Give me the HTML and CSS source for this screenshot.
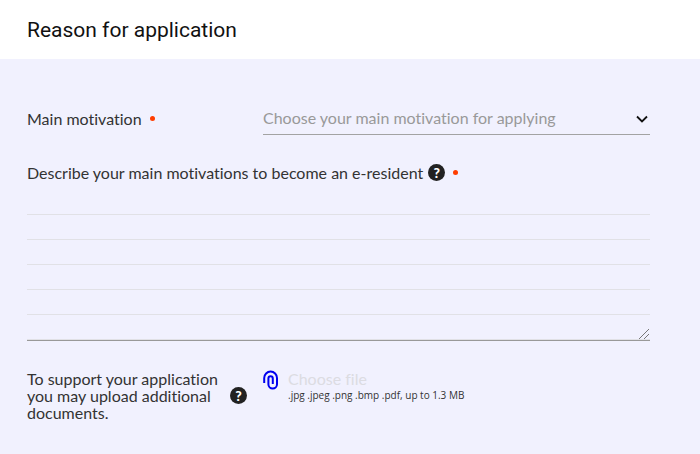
FILE: index.html
```html
<!DOCTYPE html>
<html lang="en">
<head>
    <meta charset="UTF-8">
    <meta name="viewport" content="width=device-width, initial-scale=1.0">
    <title>Reason for application</title>
    <link rel="stylesheet" href="styles.css">
</head>
<body>
    <header class="header">
        <h1 class="title">Reason for application</h1>
    </header>
    <form class="form">
        <div class="row">
            <div class="label-col">
                <label for="motivation">Main motivation</label>
                <span class="required"></span>
            </div>
            <div class="select-wrap">
                <select class="select" id="motivation" required>
                    <option value="">Choose your main motivation for applying</option>
                </select>
                <svg class="arrow" viewBox="0 0 12 8" width="12" height="8">
                    <path d="M1 1.500 6 6.500l5-5" fill="none" stroke="#111" stroke-width="1.800"/>
                </svg>
            </div>
        </div>

        <div class="describe">
            <div class="describe-label">
                <label for="description">Describe your main motivations to become an e-resident</label>
                <button class="help" type="button">?</button>
                <span class="required"></span>
            </div>
            <div class="textarea-wrap">
                <textarea class="textarea" id="description" required></textarea>
                <svg class="grip" viewBox="0 0 12 12" width="12" height="12">
                    <path d="M1 11 11 1M6 11l5-5" fill="none" stroke="#777" stroke-width="1"/>
                </svg>
            </div>
        </div>

        <div class="row upload">
            <div class="label-col">
                <label class="upload-label" for="file">To support your application you may upload additional documents.</label>
                <button class="help" type="button">?</button>
            </div>
            <div class="file">
                <svg class="clip" viewBox="0 0 16 20" width="16" height="20">
                    <path d="M1.200 13V8a6.400 6.400 0 0 1 12.800 0v6.200a4.300 4.300 0 0 1-8.600 0V8.500a2.200 2.200 0 0 1 4.400 0V14" fill="none" stroke="#0000f0" stroke-width="2"/>
                </svg>
                <div>
                    <label class="file-name" for="file">Choose file</label>
                    <input class="file-input" type="file" id="file" accept=".jpg,.jpeg,.png,.bmp,.pdf">
                    <p class="file-types">.jpg .jpeg .png .bmp .pdf, up to 1.3 MB</p>
                </div>
            </div>
        </div>
    </form>
</body>
</html>
```
FILE: styles.css
```css
body {
    margin: 0;
    min-height: 100vh;
    display: flex;
    flex-direction: column;
    background-color: #fff;
    color: #333;
    font-family: 'Lato', sans-serif;
    font-size: 16px;
    font-weight: 400;
    font-variant-ligatures: none;
    line-height: 17px;
}

.header {
    padding: 16px 27px 15px;
}

.title {
    margin: 0;
    font-family: 'Roboto', sans-serif;
    font-size: 21px;
    font-weight: 400;
    line-height: 28px;
    color: #111;
}

.form {
    flex: 1;
    padding: 42px 50px 32px 27px;
    background-color: #f1f1fe;
}

.row {
    display: flex;
}

.label-col {
    flex: 0 0 236px;
    display: flex;
    align-items: center;
}

.required {
    width: 5px;
    height: 5px;
    margin-left: 8px;
    border-radius: 50%;
    background-color: #ff3d00;
}

.select-wrap {
    flex: 1;
    position: relative;
}

.select {
    display: block;
    width: 100%;
    height: 34px;
    padding: 0 24px 0 0;
    border: none;
    border-bottom: 1px solid #a3a3a3;
    border-radius: 0;
    background: none;
    color: #999;
    font: inherit;
    font-variant-ligatures: none;
    line-height: 20px;
    appearance: none;
}

.arrow {
    position: absolute;
    right: 2px;
    top: 14px;
    pointer-events: none;
}

.describe {
    margin-top: 27px;
}

.describe-label {
    display: flex;
    align-items: center;
    height: 20px;
}

.help {
    flex: none;
    width: 17px;
    height: 17px;
    margin-left: 5px;
    padding: 0;
    border: none;
    border-radius: 50%;
    background-color: #222;
    color: #fff;
    font-family: 'Lato', sans-serif;
    font-size: 14px;
    font-weight: 900;
    line-height: 17px;
    text-align: center;
    cursor: pointer;
}

.textarea-wrap {
    position: relative;
    margin-top: 8px;
}

.textarea {
    display: block;
    box-sizing: border-box;
    width: 100%;
    height: 151px;
    padding: 0;
    border: none;
    border-bottom: 1px solid #999;
    background: repeating-linear-gradient(transparent 0 24px, #e1e1e6 24px 25px);
    font: inherit;
    line-height: 25px;
    resize: vertical;
}

.textarea::-webkit-resizer {
    background: transparent;
}

.grip {
    position: absolute;
    right: 0;
    bottom: 1px;
    pointer-events: none;
}

.upload {
    margin-top: 29px;
}

.upload-label {
    width: 198px;
}

.file {
    display: flex;
    gap: 9px;
}

.file-name {
    color: #dcdce2;
    cursor: pointer;
}

.file-input {
    position: absolute;
    width: 1px;
    height: 1px;
    opacity: 0;
}

.file-types {
    margin: 0;
    font-family: 'Open Sans', sans-serif;
    font-size: 10px;
    font-weight: 400;
}
```
